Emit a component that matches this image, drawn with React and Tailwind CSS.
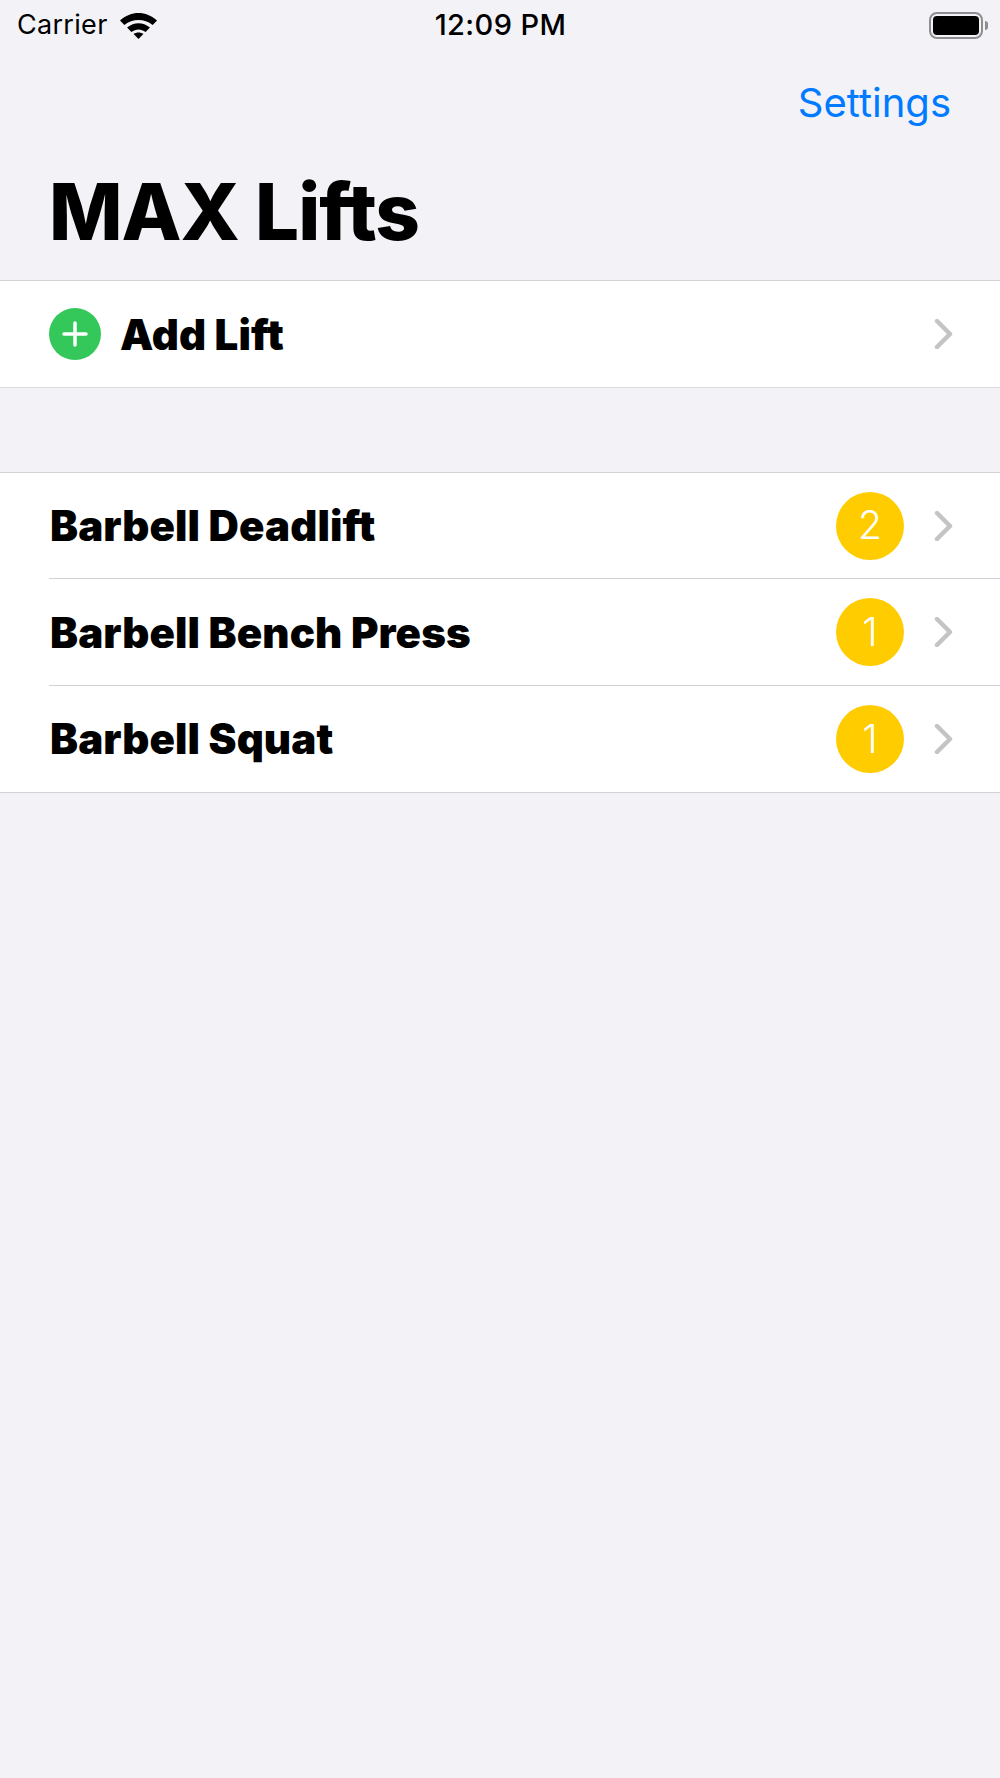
const lifts = [
  { name: "Barbell Deadlift", count: 2 },
  { name: "Barbell Bench Press", count: 1 },
  { name: "Barbell Squat", count: 1 },
]

function Chevron() {
  return (
    <svg width="20" height="30" viewBox="0 0 20 30" fill="none" className="shrink-0">
      <path d="M3 2 L16 15 L3 28" stroke="#c4c4c7" strokeWidth="4.5" strokeLinecap="round" strokeLinejoin="round" />
    </svg>
  )
}

function WifiIcon() {
  return (
    <svg width="37" height="27" viewBox="0 0 34 27" preserveAspectRatio="none" className="shrink-0">
      <path d="M0 8.5 C10 -1.5 24 -1.5 34 8.5 L30 13 C22.5 6.2 11.5 6.2 4 13 Z" fill="#000" />
      <path d="M6.5 15.5 C13 9.7 21 9.7 27.5 15.5 L23.5 20 C19.5 16.5 14.5 16.5 10.5 20 Z" fill="#000" />
      <path d="M12.5 22 C15 20 19 20 21.5 22 L17 27 Z" fill="#000" />
    </svg>
  )
}

function BatteryIcon() {
  return (
    <div className="flex items-center">
      <div className="flex h-[27px] w-[54px] rounded-[8px] border-[2px] border-[#8e8e90] p-[2px]">
        <div className="flex-1 rounded-[4px] bg-black" />
      </div>
      <div className="ml-[2px] h-[9px] w-[3px] rounded-r-full bg-[#8e8e90]" />
    </div>
  )
}

function Row({ children, last }) {
  return (
    <div className="flex h-[106.4px] pl-[49px]">
      <div className={`flex flex-1 items-center pr-[46px] ${last ? "" : "border-b-[1.5px] border-[#d2d2d5]"}`}>
        {children}
      </div>
    </div>
  )
}

export default function App() {
  return (
    <div className="min-h-[1778px] w-[1000px] overflow-hidden bg-[#f2f2f7] font-['Inter',sans-serif] text-black">
      <div className="grid h-[50px] grid-cols-3 items-center pl-[17px] pr-[12px]">
        <div className="flex items-center gap-[12px]">
          <span className="text-[27px] tracking-[0.3px]">Carrier</span>
          <WifiIcon />
        </div>
        <div className="pr-[4px] text-center text-[29px] font-medium tracking-[0.4px]">12:09 PM</div>
        <div className="flex justify-end">
          <BatteryIcon />
        </div>
      </div>

      <div className="flex h-[106px] items-center justify-end pr-[49px] text-[40px] text-[#007aff]">
        Settings
      </div>

      <h1 className="flex h-[124px] items-center pb-[12px] pl-[49px] text-[78px] leading-none font-extrabold tracking-[-1px]">MAX Lifts</h1>

      <div className="h-[108px] border-t-[1.5px] border-b-[1.5px] border-t-[#d2d2d5] border-b-[#dcdce0] bg-white pl-[49px] pr-[46px]">
        <div className="flex h-full items-center">
          <div className="flex h-[52px] w-[52px] items-center justify-center rounded-full bg-[#34c759]">
            <svg width="28" height="28" viewBox="0 0 28 28" fill="none">
              <path d="M14 3 V25 M3 14 H25" stroke="#fff" strokeWidth="3.5" strokeLinecap="round" />
            </svg>
          </div>
          <span className="ml-[19px] flex-1 text-[42px] font-black tracking-[0.1px]">Add Lift</span>
          <Chevron />
        </div>
      </div>

      <div className="h-[84px]" />

      <div className="border-y-[1.5px] border-[#d2d2d5] bg-white">
        {lifts.map((lift, i) => (
          <Row key={lift.name} last={i === lifts.length - 1}>
            <span className="flex-1 pl-[1px] text-[42px] font-black tracking-[0.1px]">{lift.name}</span>
            <div className="mr-[30px] flex h-[68px] w-[68px] items-center justify-center rounded-full bg-[#ffcc00] text-[39px] font-light text-white">
              {lift.count}
            </div>
            <Chevron />
          </Row>
        ))}
      </div>
    </div>
  )
}
